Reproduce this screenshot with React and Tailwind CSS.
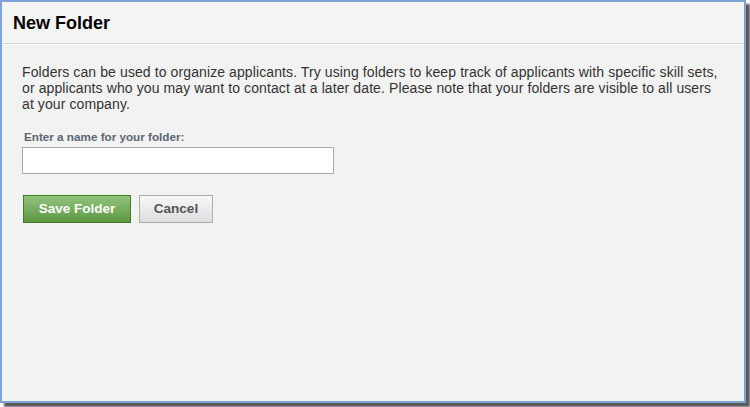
import React from "react";

export default function App() {
  return (
    <div className="w-[750px] h-[407px] bg-white font-['Liberation_Sans',Arial,sans-serif]">
      <div className="w-[746px] h-[403px] bg-[#f2f2f2] border-2 border-[#7ea4d4] shadow-[4px_4px_2px_rgba(0,0,0,0.65)] flex flex-col">
        {/* Header */}
        <div className="h-[42px] shrink-0 bg-[#f4f4f4] border-b border-[#d9d9d9] flex items-center px-[11px] pt-[1px]">
          <h1 className="text-[18px] font-bold text-black leading-none">New Folder</h1>
        </div>

        {/* Body */}
        <div className="border-t border-white px-[20px] pt-[19px]">
          <p className="text-[14px] leading-[16px] tracking-[0.1px] text-[#333] w-[705px]">
            Folders can be used to organize applicants. Try using folders to keep track of applicants with specific skill sets,
            <br />
            or applicants who you may want to contact at a later date. Please note that your folders are visible to all users
            <br />
            at your company.
          </p>

          <label className="block mt-[18px] pl-[2px] text-[11.7px] leading-[14px] font-bold text-[#5b6772]">
            Enter a name for your folder:
          </label>
          <input
            type="text"
            className="block mt-[3px] w-[312px] h-[27px] bg-white border border-[#a9a9a9] outline-none px-1 text-[13px]"
          />

          <div className="flex gap-[8px] mt-[21px] ml-[1px]">
            <button className="w-[108px] h-[28px] border border-[#3f7b2b] bg-gradient-to-b from-[#93c47d] to-[#5c9843] text-white text-[13.5px] font-bold">
              Save Folder
            </button>
            <button className="w-[74px] h-[28px] border border-[#ababab] bg-gradient-to-b from-[#f7f7f7] to-[#dedede] text-[#555] text-[13.5px] font-bold">
              Cancel
            </button>
          </div>
        </div>
      </div>
    </div>
  );
}
